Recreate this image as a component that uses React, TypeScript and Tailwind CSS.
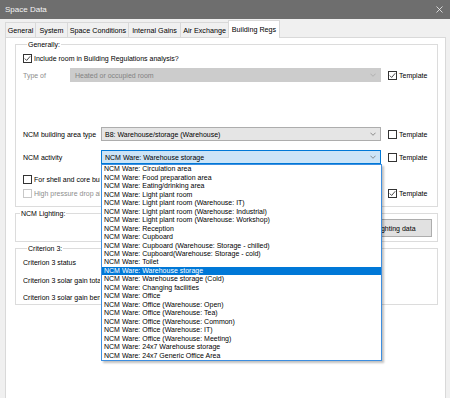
import React from 'react';

const activities = [
  'Circulation area',
  'Food preparation area',
  'Eating/drinking area',
  'Light plant room',
  'Light plant room (Warehouse: IT)',
  'Light plant room (Warehouse: Industrial)',
  'Light plant room (Warehouse: Workshop)',
  'Reception',
  'Cupboard',
  'Cupboard (Warehouse: Storage - chilled)',
  'Cupboard(Warehouse: Storage - cold)',
  'Toilet',
  'Warehouse storage',
  'Warehouse storage (Cold)',
  'Changing facilities',
  'Office',
  'Office (Warehouse: Open)',
  'Office (Warehouse: Tea)',
  'Office (Warehouse: Common)',
  'Office (Warehouse: IT)',
  'Office (Warehouse: Meeting)',
  '24x7 Warehouse storage',
  '24x7 Generic Office Area',
];

const tabs = [
  { label: 'General', w: 'w-[31px]' },
  { label: 'System', w: 'w-[33px]' },
  { label: 'Space Conditions', w: 'w-[62px]' },
  { label: 'Internal Gains', w: 'w-[53px]' },
  { label: 'Air Exchange', w: 'w-[49px]' },
];

const Check = ({ checked = false, disabled = false }: { checked?: boolean; disabled?: boolean }) => (
  <span
    className={`flex h-[9px] w-[9px] shrink-0 items-center justify-center border bg-white ${
      disabled ? 'border-[#c8c8c8]' : 'border-[#333333]'
    }`}
  >
    {checked && (
      <svg viewBox="0 0 9 9" className="h-[7px] w-[7px]">
        <path d="M1 4.6 L3.4 7 L8 1.6" fill="none" stroke="#1a1a1a" strokeWidth="1" />
      </svg>
    )}
  </span>
);

const Chevron = ({ color }: { color: string }) => (
  <svg viewBox="0 0 7 4" className="h-[4px] w-[6px]">
    <path d="M0.5 0.5 L3.5 3.5 L6.5 0.5" fill="none" stroke={color} strokeWidth="0.8" />
  </svg>
);

const Template = ({ checked = false }: { checked?: boolean }) => (
  <div className="ml-[7px] flex items-center gap-[2px]">
    <Check checked={checked} />
    <span>Template</span>
  </div>
);

const App = () => {
  return (
    <div className="relative h-[398px] w-[450px] overflow-hidden bg-[#f0f0f0] font-['Liberation_Sans',Arial,sans-serif] text-[7px] leading-[9px] text-black">
      {/* Title bar */}
      <div className="flex h-[19px] items-center justify-between bg-[#6e6e6e] pl-[5px] pr-[7px] text-[8px] text-[#f4f4f4]">
        <span>Space Data</span>
        <svg viewBox="0 0 7 7" className="h-[7px] w-[7px]">
          <path d="M0.5 0.5 L6.5 6.5 M6.5 0.5 L0.5 6.5" stroke="#f2f2f2" strokeWidth="0.8" />
        </svg>
      </div>

      {/* Tabs */}
      <div className="flex h-[18px] items-end pl-[5px] text-[7.2px]">
        {tabs.map((t) => (
          <div
            key={t.label}
            className={`-mr-px flex h-[15px] ${t.w} items-center justify-center border border-b-0 border-[#d9d9d9] bg-[#f0f0f0]`}
          >
            {t.label}
          </div>
        ))}
        <div className="relative z-10 -mb-px flex h-[18px] w-[52px] items-center justify-center border border-b-0 border-[#d9d9d9] bg-white pb-[1px]">
          Building Regs
        </div>
      </div>

      {/* Tab page */}
      <div className="ml-[5px] h-[400px] w-[441px] border border-[#d9d9d9] bg-white pl-[9px] pr-[7px] pt-[2px]">
        {/* Generally */}
        <fieldset className="h-[167px] border border-[#dcdcdc] pl-[7px] pr-[4px]">
          <legend className="ml-[4px] px-[1px] leading-[9px]">Generally:</legend>
          <div className="mt-[4px] flex h-[10px] items-center gap-[2px]">
            <Check checked />
            <span>Include room in Building Regulations analysis?</span>
          </div>
          <div className="mt-[5px] flex h-[14px] items-center">
            <span className="w-[47px] text-[#8d8d8d]">Type of</span>
            <div className="flex h-[14px] w-[311px] items-center justify-between border border-[#cccccc] bg-[#cccccc] pl-[4px] pr-[4px] text-[#838383]">
              <span>Heated or occupied room</span>
              <Chevron color="#a6a6a6" />
            </div>
            <Template checked />
          </div>
          <div className="mt-[45px] flex h-[14px] items-center">
            <span className="w-[78px] whitespace-nowrap">NCM building area type</span>
            <div className="flex h-[14px] w-[280px] items-center justify-between border border-[#adadad] bg-[#e5e5e5] pl-[3px] pr-[4px]">
              <span>B8: Warehouse/storage (Warehouse)</span>
              <Chevron color="#606060" />
            </div>
            <Template />
          </div>
          <div className="mt-[9px] flex h-[14px] items-center">
            <span className="w-[78px]">NCM activity</span>
            <div className="flex h-[14px] w-[280px] items-center justify-between border border-[#0078d7] bg-[#cce4f7] pl-[3px] pr-[4px]">
              <span>NCM Ware: Warehouse storage</span>
              <Chevron color="#606060" />
            </div>
            <Template />
          </div>
          <div className="mt-[10px] flex h-[10px] items-center gap-[2px]">
            <Check />
            <span className="w-[66px] overflow-hidden whitespace-nowrap">For shell and core buildings</span>
          </div>
          <div className="mt-[4px] flex h-[11px] items-center">
            <div className="flex w-[358px] items-center gap-[2px] text-[#8d8d8d]">
              <Check disabled />
              <span className="w-[66px] overflow-hidden whitespace-nowrap">High pressure drop air distribution</span>
            </div>
            <Template checked />
          </div>
        </fieldset>

        {/* NCM Lighting */}
        <fieldset className="mt-[2px] h-[33px] border border-[#dcdcdc] pr-[5px]">
          <legend className="ml-[4px] px-[1px] leading-[9px]">NCM Lighting:</legend>
          <div className="flex justify-end">
            <button className="mt-[1px] flex h-[18px] w-[73px] items-center justify-center border border-[#adadad] bg-[#e1e1e1]">
              Lighting data
            </button>
          </div>
        </fieldset>

        {/* Criterion 3 */}
        <fieldset className="mt-[2px] h-[61px] border border-[#dcdcdc] pl-[7px]">
          <legend className="ml-[4px] px-[1px] leading-[9px]">Criterion 3:</legend>
          <div className="mt-[4px] flex h-[10px] items-center">Criterion 3 status</div>
          <div className="mt-[8px] flex h-[10px] w-[77px] items-center overflow-hidden whitespace-nowrap">Criterion 3 solar gain total</div>
          <div className="mt-[7px] flex h-[10px] w-[77px] items-center overflow-hidden whitespace-nowrap">Criterion 3 solar gain benchmark</div>
        </fieldset>
      </div>

      {/* Open dropdown list */}
      <div className="absolute left-[101px] top-[164px] z-20 grid h-[197px] w-[281px] grid-rows-[repeat(23,minmax(0,1fr))] overflow-hidden border border-[#3d8ee0] bg-white shadow-[2px_2px_2px_rgba(0,0,0,0.25)]">
        {activities.map((a) => {
          const selected = a === 'Warehouse storage';
          return (
            <div
              key={a}
              className={`flex min-h-0 items-center pl-[2px] leading-[8px] ${selected ? 'bg-[#0078d7] text-white' : ''}`}
            >
              NCM Ware: {a}
            </div>
          );
        })}
      </div>
    </div>
  );
};

export default App;
